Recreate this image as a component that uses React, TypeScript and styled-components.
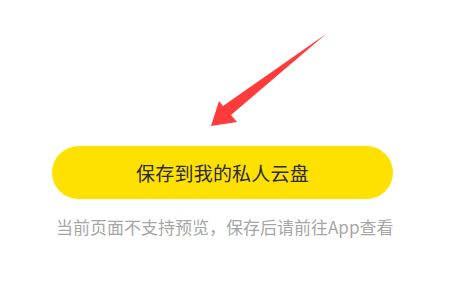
import * as React from "react";
import styled, { createGlobalStyle } from "styled-components";

const Global = createGlobalStyle`
    html, body {
        margin: 0;
        padding: 0;
        background: #ffffff;
    }
    body {
        font-family: "Noto Sans CJK SC", "Noto Sans", sans-serif;
    }
`;

const Page = styled.div`
    width: 449px;
    height: 283px;
    display: flex;
    flex-direction: column;
    background: #ffffff;
`;

const Pointer = styled.svg`
    display: block;
    width: 449px;
    height: 146px;
    flex-shrink: 0;
`;

const SaveButton = styled.button`
    margin: 0 56px 0 52px;
    height: 53px;
    border: none;
    border-radius: 27px;
    background: #ffe100;
    color: #2b2b2b;
    font-family: inherit;
    font-size: 19px;
    letter-spacing: 0.2px;
    cursor: pointer;
`;

const Hint = styled.div`
    margin-top: 16px;
    padding-left: 56px;
    color: #a6a6a6;
    font-size: 17px;
    line-height: 24px;
    white-space: nowrap;
`;

export default function App() {
    return (
        <>
            <Global />
            <Page>
                <Pointer viewBox="0 0 449 146">
                    <polygon
                        points="326,34 231,115 237,122 211,126 219,101 223,106"
                        fill="#ff3b3b"
                    />
                </Pointer>
                <SaveButton>保存到我的私人云盘</SaveButton>
                <Hint>当前页面不支持预览，保存后请前往App查看</Hint>
            </Page>
        </>
    );
}
